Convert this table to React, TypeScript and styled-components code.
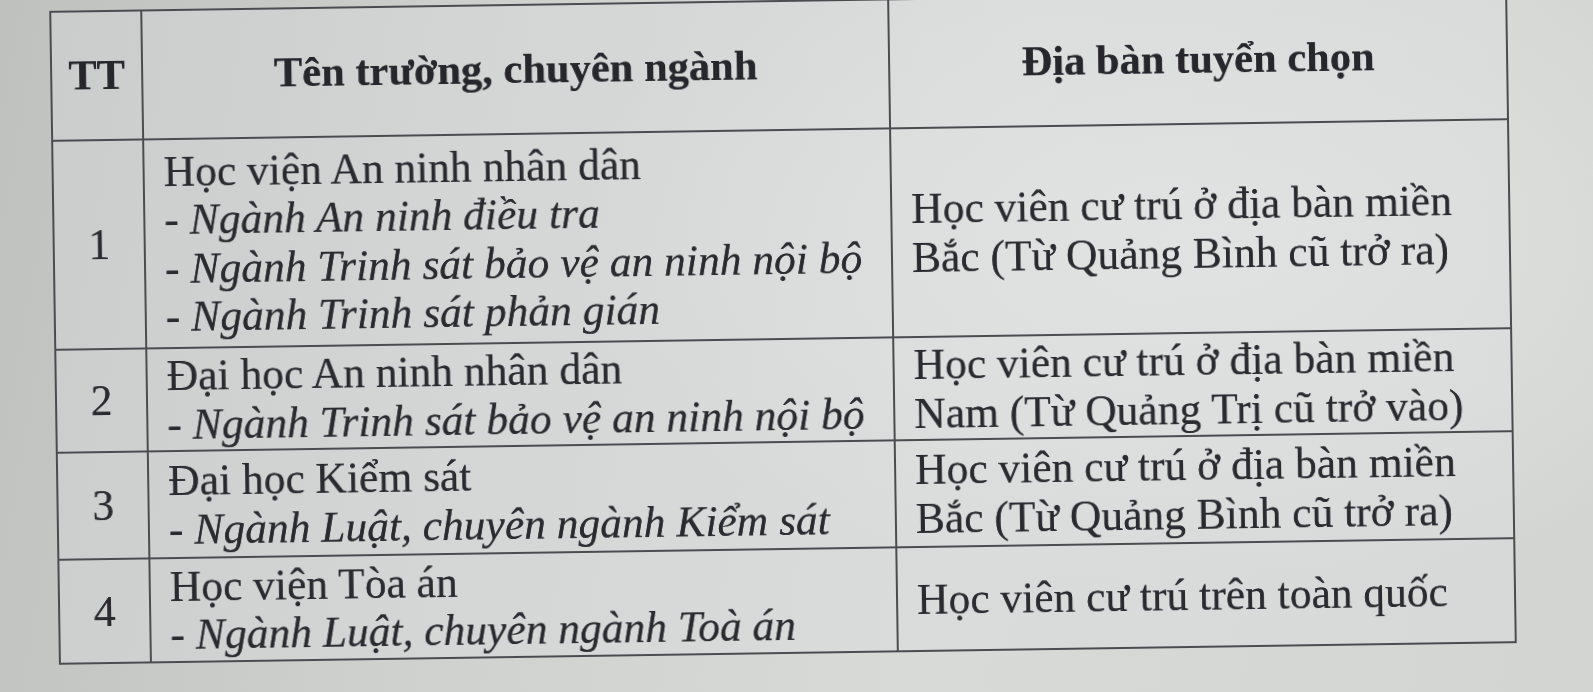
import React from "react";
import styled, { createGlobalStyle } from "styled-components";

const GlobalStyle = createGlobalStyle`
  html, body {
    margin: 0;
    padding: 0;
    width: 1593px;
    height: 692px;
    overflow: hidden;
  }
  body {
    background:
      radial-gradient(ellipse 900px 500px at 75% 35%, rgba(232, 234, 232, 0.7), rgba(232, 234, 232, 0) 70%),
      linear-gradient(100deg, #bfc1bf 0%, #cfd1cf 30%, #d8dad8 60%, #d3d5d3 100%);
    font-family: "Liberation Serif", "Times New Roman", serif;
    color: #2a2a30;
  }
`;

const rows = [
  {
    no: "1",
    h: 209,
    school: "Học viện An ninh nhân dân",
    majors: [
      "- Ngành An ninh điều tra",
      "- Ngành Trinh sát bảo vệ an ninh nội bộ",
      "- Ngành Trinh sát phản gián",
    ],
    area: ["Học viên cư trú ở địa bàn miền", "Bắc (Từ Quảng Bình cũ trở ra)"],
  },
  {
    no: "2",
    h: 103,
    school: "Đại học An ninh nhân dân",
    majors: ["- Ngành Trinh sát bảo vệ an ninh nội bộ"],
    area: ["Học viên cư trú ở địa bàn miền", "Nam (Từ Quảng Trị cũ trở vào)"],
  },
  {
    no: "3",
    h: 107,
    school: "Đại học Kiểm sát",
    majors: ["- Ngành Luật, chuyên ngành Kiểm sát"],
    area: ["Học viên cư trú ở địa bàn miền", "Bắc (Từ Quảng Bình cũ trở ra)"],
  },
  {
    no: "4",
    h: 104,
    school: "Học viện Tòa án",
    majors: ["- Ngành Luật, chuyên ngành Toà án"],
    area: ["Học viên cư trú trên toàn quốc"],
  },
];

export default function App() {
  return (
    <Page>
      <GlobalStyle />
      <Sheet>
        <colgroup>
          <col style={{ width: 91 }} />
          <col style={{ width: 747 }} />
          <col style={{ width: 618 }} />
        </colgroup>
        <thead>
          <Row $h={129}>
            <Head>TT</Head>
            <Head>Tên trường, chuyên ngành</Head>
            <Head>Địa bàn tuyển chọn</Head>
          </Row>
        </thead>
        <tbody>
          {rows.map((r) => (
            <Row key={r.no} $h={r.h}>
              <Num>{r.no}</Num>
              <Cell>
                <Line>{r.school}</Line>
                {r.majors.map((m) => (
                  <Major key={m}>{m}</Major>
                ))}
              </Cell>
              <Cell>
                {r.area.map((a) => (
                  <Line key={a}>{a}</Line>
                ))}
              </Cell>
            </Row>
          ))}
        </tbody>
      </Sheet>
    </Page>
  );
}

const Page = styled.div`
  width: 1593px;
  height: 692px;
  padding: 0 0 0 54px;
  box-sizing: border-box;
`;

const Sheet = styled.table`
  width: 1456px;
  border-collapse: collapse;
  table-layout: fixed;
  transform: rotate(-0.85deg);
  transform-origin: 50% 50%;
  filter: blur(0.6px);
  font-size: 43.5px;
  line-height: 48.5px;
  background: rgba(222, 224, 224, 0.35);
  text-shadow: 0 0 0.6px rgba(30, 30, 36, 0.8);
`;

const Row = styled.tr<{ $h: number }>`
  height: ${(p) => p.$h}px;
`;

const Head = styled.th`
  border: 2px solid #4b4c50;
  padding: 0 10px;
  font-size: 42.5px;
  font-weight: bold;
  text-align: center;
  vertical-align: middle;
  color: #26262c;
`;

const Num = styled.td`
  border: 2px solid #4b4c50;
  padding: 0;
  text-align: center;
  vertical-align: middle;
`;

const Cell = styled.td`
  border: 2px solid #4b4c50;
  padding: 1px 14px 1px 19px;
  text-align: left;
  vertical-align: middle;
  white-space: nowrap;
`;

const Line = styled.div``;

const Major = styled.div`
  font-style: italic;
`;
